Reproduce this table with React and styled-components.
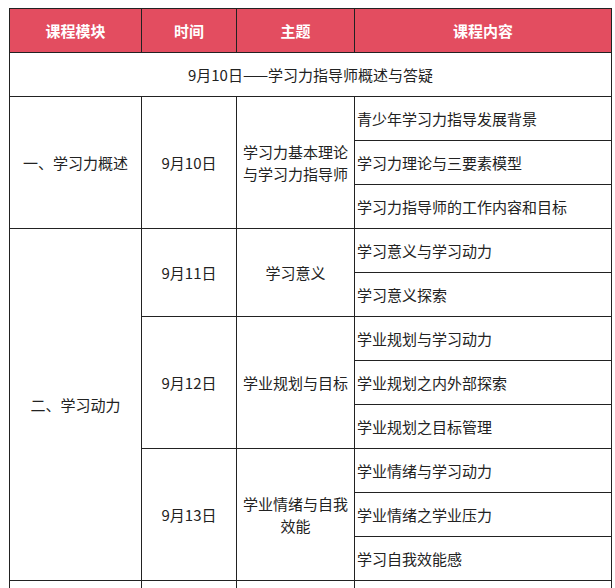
import React from "react";
import styled, { createGlobalStyle } from "styled-components";

const Global = createGlobalStyle`
  html, body { margin: 0; padding: 0; background: #fff; }
  body { padding: 8px 0 0 9px; font-family: "Noto Sans CJK SC", "Noto Sans", sans-serif; }
  * { box-sizing: border-box; }
`;

const Table = styled.table`
  border-collapse: collapse;
  table-layout: fixed;
  width: 602px;
  font-size: 15px;
  color: #222;
`;

const Col = styled.col`
  width: ${(p) => p.$w}px;
`;

const Th = styled.th`
  background: #e34d60;
  color: #fff;
  font-weight: 600;
  height: 44px;
  border: 1px solid #222;
  text-align: center;
  padding: 0;
`;

const Td = styled.td`
  border: 1px solid #222;
  height: 44px;
  padding: ${(p) => (p.$left ? "0 0 0 2px" : "0 4px")};
  text-align: ${(p) => (p.$left ? "left" : "center")};
  vertical-align: middle;
  line-height: 22px;
  white-space: ${(p) => (p.$wrap ? "normal" : "nowrap")};
  overflow: hidden;
`;

const sections = [
  {
    module: "一、学习力概述",
    days: [
      {
        date: "9月10日",
        topic: "学习力基本理论与学习力指导师",
        items: ["青少年学习力指导发展背景", "学习力理论与三要素模型", "学习力指导师的工作内容和目标"],
      },
    ],
  },
  {
    module: "二、学习动力",
    days: [
      { date: "9月11日", topic: "学习意义", items: ["学习意义与学习动力", "学习意义探索"] },
      {
        date: "9月12日",
        topic: "学业规划与目标",
        items: ["学业规划与学习动力", "学业规划之内外部探索", "学业规划之目标管理"],
      },
      {
        date: "9月13日",
        topic: "学业情绪与自我效能",
        items: ["学业情绪与学习动力", "学业情绪之学业压力", "学习自我效能感"],
      },
    ],
  },
];

export default function App() {
  const rows = [];
  sections.forEach((s, si) => {
    const total = s.days.reduce((a, d) => a + d.items.length, 0);
    s.days.forEach((d, di) => {
      d.items.forEach((it, ii) => {
        rows.push(
          <tr key={`${si}-${di}-${ii}`}>
            {di === 0 && ii === 0 && <Td rowSpan={total}>{s.module}</Td>}
            {ii === 0 && <Td rowSpan={d.items.length}>{d.date}</Td>}
            {ii === 0 && (
              <Td rowSpan={d.items.length} $wrap>
                {d.topic}
              </Td>
            )}
            <Td $left>{it}</Td>
          </tr>
        );
      });
    });
  });
  return (
    <>
      <Global />
      <Table>
        <colgroup>
          <Col $w={132} />
          <Col $w={95} />
          <Col $w={118} />
          <Col $w={257} />
        </colgroup>
        <thead>
          <tr>
            <Th>课程模块</Th>
            <Th>时间</Th>
            <Th>主题</Th>
            <Th>课程内容</Th>
          </tr>
        </thead>
        <tbody>
          <tr>
            <Td colSpan={4}>9月10日——学习力指导师概述与答疑</Td>
          </tr>
          {rows}
          <tr>
            <Td></Td>
            <Td></Td>
            <Td></Td>
            <Td $left></Td>
          </tr>
        </tbody>
      </Table>
    </>
  );
}
